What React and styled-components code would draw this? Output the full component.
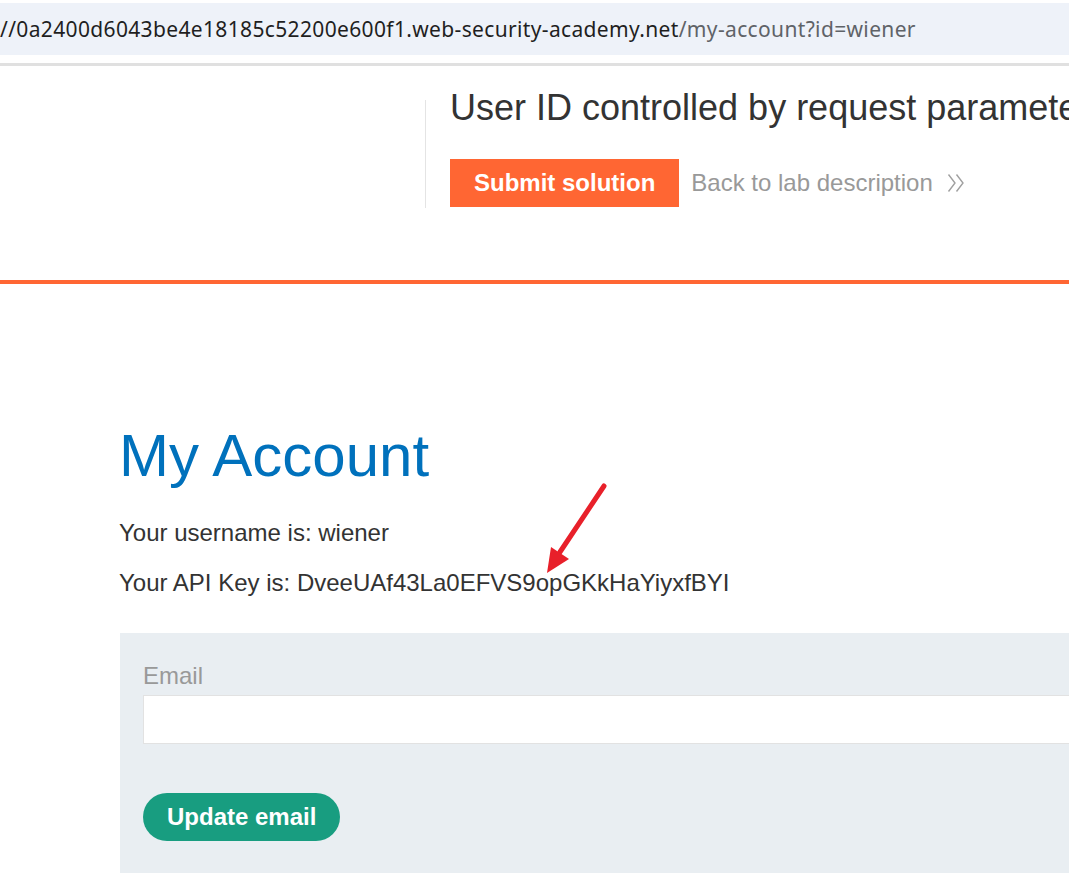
import styled, { createGlobalStyle } from "styled-components";

const GlobalStyle = createGlobalStyle`
    html, body {
        margin: 0;
        padding: 0;
        background: #ffffff;
        overflow: hidden;
    }
    body {
        font-family: "Liberation Sans", Arial, sans-serif;
        color: #333333;
    }
`

function App() {
    return (
        <Page>
            <GlobalStyle />
            <AddressBar>
                <Host>//0a2400d6043be4e18185c52200e600f1.web-security-academy.net</Host>
                <Path>/my-account?id=wiener</Path>
            </AddressBar>
            <ChromeRule />
            <LabHeader>
                <LogoSpace />
                <LabInfo>
                    <LabTitle>User ID controlled by request parameter</LabTitle>
                    <Actions>
                        <SubmitButton>Submit solution</SubmitButton>
                        <BackLink>
                            Back to lab description
                            <Chevrons />
                        </BackLink>
                    </Actions>
                </LabInfo>
            </LabHeader>
            <Content>
                <Heading>My Account</Heading>
                <Line>Your username is: wiener</Line>
                <Line>Your API Key is: DveeUAf43La0EFVS9opGKkHaYiyxfBYI</Line>
                <EmailForm>
                    <Label>Email</Label>
                    <Input type="email" />
                    <UpdateButton>Update email</UpdateButton>
                </EmailForm>
            </Content>
            <Arrow />
        </Page>
    )
}

function Chevrons() {
    return (
        <ChevronSvg viewBox="0 0 18 20" width="18" height="20">
            <polyline points="1.5,1.5 8,10 1.5,18.5" fill="none" stroke="#a0a0a0" strokeWidth="1.4" />
            <polyline points="9.5,1.5 16,10 9.5,18.5" fill="none" stroke="#a0a0a0" strokeWidth="1.4" />
        </ChevronSvg>
    )
}

function Arrow() {
    return (
        <ArrowSvg viewBox="0 0 75 100" width="75" height="100">
            <line x1="64" y1="8" x2="20" y2="74" stroke="#e8202a" strokeWidth="5" strokeLinecap="round" />
            <polygon points="7,95 11,69 29,81" fill="#e8202a" />
        </ArrowSvg>
    )
}

const Page = styled.div`
    position: relative;
    width: 100vw;
    height: 100vh;
    overflow: hidden;
`

const AddressBar = styled.div`
    margin-top: 3px;
    height: 52px;
    display: flex;
    align-items: center;
    background-color: #eef2f9;
    font-family: "Noto Sans", sans-serif;
    font-size: 21px;
    letter-spacing: 0.35px;
    white-space: nowrap;
`

const Host = styled.span`
    color: #1f1f1f;
`

const Path = styled.span`
    color: #5f6368;
`

const ChromeRule = styled.div`
    margin-top: 8px;
    height: 3px;
    background-color: #e0e0e0;
`

const LabHeader = styled.header`
    height: 192px;
    padding-top: 22px;
    display: flex;
    align-items: flex-start;
    border-bottom: 4px solid #ff6633;
`

const LogoSpace = styled.div`
    flex: none;
    width: 425px;
    height: 108px;
    margin-top: 12px;
    border-right: 1px solid #e4e4e4;
`

const LabInfo = styled.div`
    margin-left: 24px;
    white-space: nowrap;
`

const LabTitle = styled.h2`
    margin: 0;
    font-size: 36px;
    line-height: 40px;
    font-weight: normal;
    color: #333333;
`

const Actions = styled.div`
    margin-top: 31px;
    display: flex;
    align-items: center;
`

const SubmitButton = styled.button`
    height: 48px;
    padding: 0 24px;
    border: 0;
    border-radius: 0;
    background-color: #ff6633;
    color: #ffffff;
    font-family: "Liberation Sans", Arial, sans-serif;
    font-size: 24px;
    font-weight: bold;
`

const BackLink = styled.a`
    margin-left: 12px;
    display: flex;
    align-items: center;
    gap: 14px;
    font-size: 24px;
    color: #999999;
`

const ChevronSvg = styled.svg`
    display: block;
`

const Content = styled.main`
    padding-left: 120px;
    padding-top: 136px;
`

const Heading = styled.h1`
    margin: 0 0 26px -1px;
    font-size: 60px;
    line-height: 72px;
    font-weight: normal;
    color: #0071bc;
`

const Line = styled.p`
    margin: 0 0 20px -1px;
    font-size: 24px;
    line-height: 30px;
    color: #333333;
    white-space: nowrap;
`

const EmailForm = styled.form`
    margin-top: 35px;
    width: 1200px;
    height: 300px;
    padding: 28px 24px 0 23px;
    box-sizing: border-box;
    background-color: #e9eef2;
`

const Label = styled.label`
    display: block;
    font-size: 24px;
    line-height: 30px;
    color: #999999;
`

const Input = styled.input`
    display: block;
    margin-top: 4px;
    width: 100%;
    height: 49px;
    box-sizing: border-box;
    border: 1px solid #e2e2e2;
    background: #ffffff;
    outline: none;
`

const UpdateButton = styled.button`
    margin-top: 49px;
    height: 48px;
    padding: 0 24px;
    border: 0;
    border-radius: 24px;
    background-color: #189d80;
    color: #ffffff;
    font-family: "Liberation Sans", Arial, sans-serif;
    font-size: 24px;
    font-weight: bold;
`

const ArrowSvg = styled.svg`
    position: absolute;
    left: 540px;
    top: 478px;
`

export default App
